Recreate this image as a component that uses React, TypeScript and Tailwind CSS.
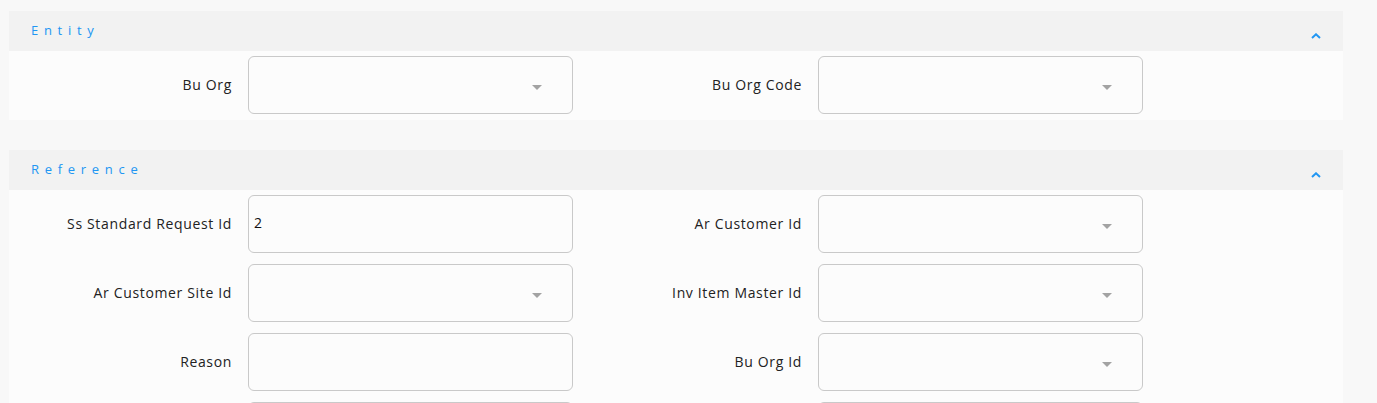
import React from "react";

type Field = { label: string; value?: string; select?: boolean };

function Triangle() {
  return (
    <svg width="10" height="5" viewBox="0 0 10 5" className="absolute right-[30px] top-[28px]">
      <path d="M0 0 L10 0 L5 5 Z" fill="#a3a3a3" />
    </svg>
  );
}

function FieldRow({ f }: { f: Field }) {
  return (
    <div className="flex items-center w-[570px]">
      <div className="w-[223px] text-right text-[14px] text-[#222] leading-none tracking-[0.65px] whitespace-nowrap">{f.label}</div>
      <div className="ml-[16px] relative w-[325px] h-[58px] rounded-[6px] border border-[#c9c9c9] bg-[#fcfcfc] flex items-center pl-[5px] pb-[4px] text-[14px] text-[#111]">
        {f.value}
        {f.select ? <Triangle /> : null}
      </div>
    </div>
  );
}

function Section({ title, rows }: { title: string; rows: [Field, Field][] }) {
  return (
    <div className="w-[1334px]">
      <div className="h-[40px] bg-[#f2f2f2] flex items-center justify-between pl-[22px] pr-[22px]">
        <span className="text-[13px] tracking-[5.7px] text-[#2196f3]">{title}</span>
        <svg width="10" height="6" viewBox="0 0 10 6" className="mt-[9px]">
          <path d="M1 5 L5 1.3 L9 5" stroke="#2196f3" strokeWidth="2" fill="none" />
        </svg>
      </div>
      <div className="bg-[#fcfcfc] pt-[5px] pb-[6px] flex flex-col gap-[11px]">
        {rows.map((r, i) => (
          <div key={i} className="flex">
            <FieldRow f={r[0]} />
            <FieldRow f={r[1]} />
          </div>
        ))}
      </div>
    </div>
  );
}

export default function App() {
  return (
    <div
      className="min-h-screen bg-[#f8f8f8] pt-[11px] pl-[9px] flex flex-col gap-[30px] overflow-hidden h-[403px]"
      style={{ fontFamily: "'Open Sans', Roboto, sans-serif" }}
    >
      <Section
        title="Entity"
        rows={[[{ label: "Bu Org", select: true }, { label: "Bu Org Code", select: true }]]}
      />
      <Section
        title="Reference"
        rows={[
          [{ label: "Ss Standard Request Id", value: "2" }, { label: "Ar Customer Id", select: true }],
          [{ label: "Ar Customer Site Id", select: true }, { label: "Inv Item Master Id", select: true }],
          [{ label: "Reason" }, { label: "Bu Org Id", select: true }],
          [{ label: "" }, { label: "" }],
        ]}
      />
    </div>
  );
}
